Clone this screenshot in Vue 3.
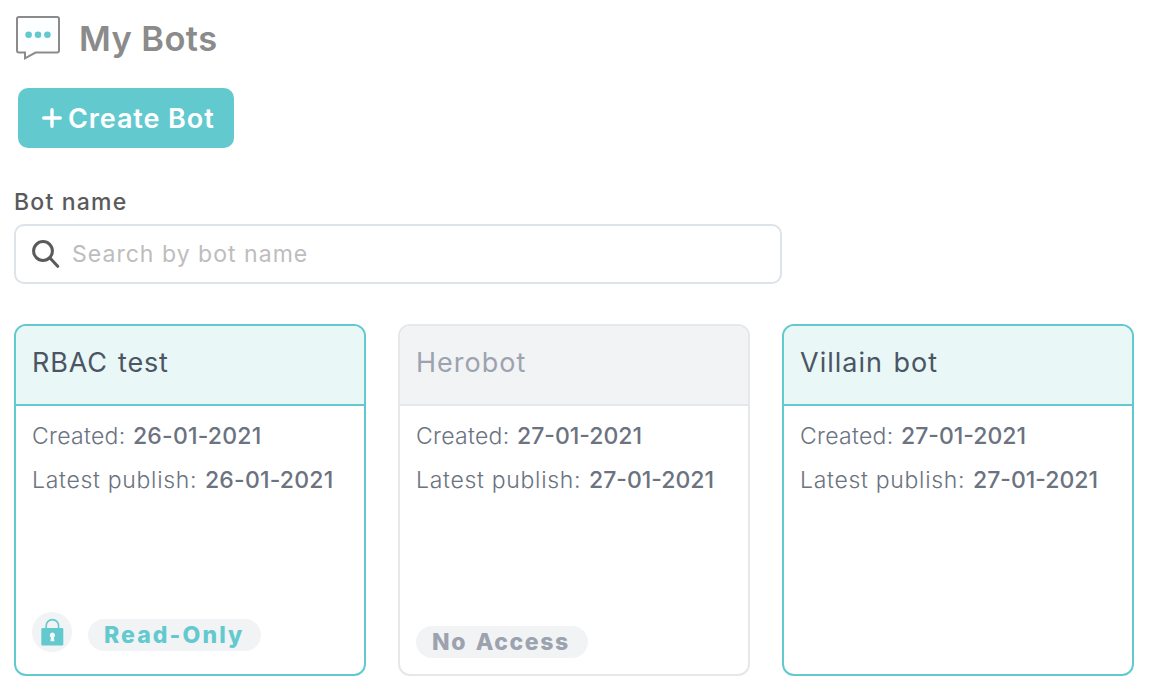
<script setup>
const bots = [
  { name: 'RBAC test', date: '26-01-2021', kind: 'rbac', access: 'Read-Only', locked: true },
  { name: 'Herobot', date: '27-01-2021', kind: 'hero disabled', access: 'No Access', locked: false },
  { name: 'Villain bot', date: '27-01-2021', kind: 'villain', access: '', locked: false },
]
</script>

<template>
  <main class="page">
    <header class="heading">
      <svg class="bubble" width="44" height="44" viewBox="0 0 44 44">
        <path d="M3 1H41Q43 1 43 3V34.5Q43 36.5 41 36.5H19.5L9 42.3V36.5H3Q1 36.5 1 34.5V3Q1 1 3 1Z" fill="#fdfeff" stroke="#8b8b8b" stroke-width="2" />
        <g fill="#62cacf">
          <circle cx="12.6" cy="18.8" r="3.3" />
          <circle cx="22" cy="18.8" r="3.3" />
          <circle cx="31.4" cy="18.8" r="3.3" />
        </g>
      </svg>
      <h1>My Bots</h1>
    </header>

    <button class="create">
      <svg width="20" height="20" viewBox="0 0 20 20">
        <path d="M10 1.7V18.3M1.7 10H18.3" stroke="#fff" stroke-width="3.4" stroke-linecap="round" />
      </svg>
      <span>Create Bot</span>
    </button>

    <label class="label">Bot name</label>
    <div class="search">
      <svg width="28" height="28" viewBox="0 0 28 28" fill="none" stroke="#5a5a5a" stroke-width="3" stroke-linecap="round">
        <circle cx="11" cy="11" r="9.4" />
        <path d="M18 18L25.7 26.3" />
      </svg>
      <span>Search by bot name</span>
    </div>

    <section class="cards">
      <article v-for="bot in bots" :key="bot.name" class="card" :class="bot.kind">
        <h2>{{ bot.name }}</h2>
        <div class="body">
          <p><span class="created">Created:</span><b>{{ bot.date }}</b></p>
          <p><span class="latest">Latest publish:</span><b>{{ bot.date }}</b></p>
        </div>
        <footer v-if="bot.access">
          <svg v-if="bot.locked" class="lock" width="40" height="40" viewBox="0 0 40 40">
            <circle cx="20" cy="20" r="20" fill="#f2f3f5" />
            <path d="M14.2 17V13.8a6.2 6.2 0 0 1 12.4 0V17" fill="none" stroke="#62cacf" stroke-width="1.6" />
            <rect x="9.3" y="16" width="22" height="17.5" rx="1.3" fill="#62cacf" />
            <path d="M20.4 20.5a2.7 2.7 0 0 1 1.5 4.9l.5 3.8h-4l.5-3.8a2.7 2.7 0 0 1 1.5-4.9Z" fill="#f7f8fa" />
          </svg>
          <span class="badge">{{ bot.access }}</span>
        </footer>
      </article>
    </section>
  </main>
</template>

<style>
body {
  background: #fff;
}
</style>

<style scoped>
* {
  box-sizing: border-box;
}
.page {
  height: 698px;
  padding: 16px 14px 0;
  overflow: hidden;
  font-family: Inter, "Liberation Sans", sans-serif;
  white-space: nowrap;
}
h1, h2, p {
  margin: 0;
}
.heading {
  display: flex;
  height: 44px;
  padding-left: 2px;
}
h1 {
  margin-left: 19px;
  font-size: 34.5px;
  font-weight: 600;
  line-height: 46px;
  color: #8b8b8b;
  letter-spacing: 0.4px;
}
.create {
  display: flex;
  align-items: center;
  width: 216px;
  height: 60px;
  margin: 28px 0 0 4px;
  padding: 0 0 0 24px;
  border: 0;
  border-radius: 10px;
  background: #62cacf;
  color: #fff;
  font-family: inherit;
  font-size: 27px;
  font-weight: 600;
  letter-spacing: 0.9px;
}
.create span {
  margin-left: 6px;
}
.label {
  display: block;
  margin-top: 38px;
  height: 32px;
  line-height: 32px;
  font-size: 23px;
  font-weight: 500;
  color: #5a5a5a;
  letter-spacing: 1.2px;
}
.search {
  display: flex;
  align-items: center;
  width: 768px;
  height: 60px;
  margin-top: 6px;
  padding-left: 16px;
  border: 2px solid #dce3e9;
  border-radius: 10px;
  font-size: 23px;
  color: #bdbdbd;
  letter-spacing: 1.03px;
}
.search span {
  margin-left: 12px;
  padding-bottom: 1px;
}
.cards {
  display: flex;
  gap: 32px;
  margin-top: 40px;
}
.card {
  display: flex;
  flex-direction: column;
  width: 352px;
  height: 352px;
  border: 2px solid #62cacf;
  border-radius: 12px;
  overflow: hidden;
  color: #6b7280;
}
h2 {
  height: 80px;
  padding-left: 16px;
  border-bottom: 2px solid #62cacf;
  background: #e9f7f7;
  font-size: 27px;
  font-weight: 400;
  line-height: 73px;
  color: #4b5563;
  letter-spacing: 1px;
  word-spacing: 2px;
}
.rbac h2 {
  letter-spacing: 0.8px;
}
.disabled, .disabled h2 {
  border-color: #e5e7eb;
}
.disabled h2 {
  background: #f2f3f5;
  color: #9ca3af;
}
.body {
  padding: 8px 0 0 16px;
}
p {
  display: flex;
  height: 44px;
  line-height: 44px;
  font-size: 23px;
  font-weight: 300;
}
p .created {
  width: 101px;
  letter-spacing: 0.3px;
}
p .latest {
  width: 173px;
  letter-spacing: 0.7px;
}
b {
  font-weight: 500;
  letter-spacing: 0;
}
.rbac b {
  letter-spacing: 0.2px;
}
footer {
  display: flex;
  align-items: flex-start;
  gap: 16px;
  height: 62px;
  margin-top: auto;
  padding-left: 16px;
}
.badge {
  width: 173px;
  height: 32px;
  margin-top: 7px;
  padding-left: 16px;
  border-radius: 16px;
  background: #f2f3f5;
  color: #62cacf;
  font-size: 23px;
  font-weight: 800;
  line-height: 32px;
  letter-spacing: 2.1px;
}
.disabled .badge {
  width: 172px;
  margin-top: 14px;
  color: #9ca3af;
  letter-spacing: 1.6px;
  word-spacing: 2px;
}
</style>
